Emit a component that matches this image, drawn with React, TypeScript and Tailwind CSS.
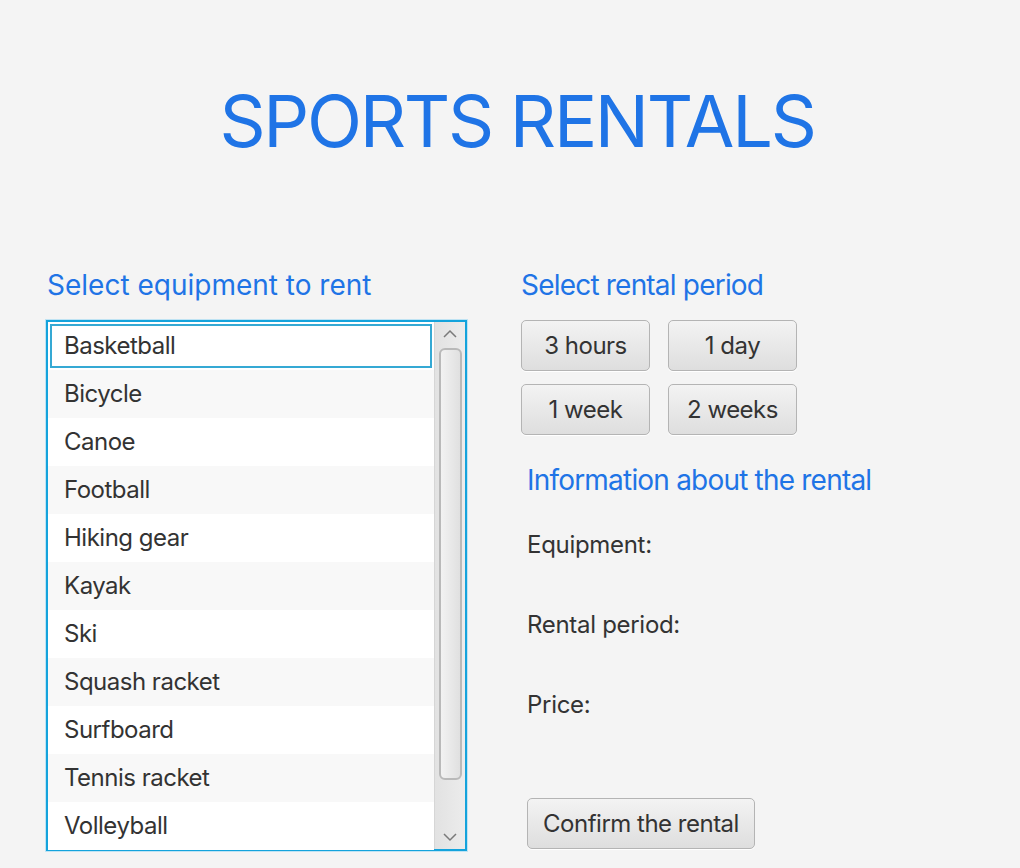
import React, { useState } from "react";

const equipment = [
  "Basketball",
  "Bicycle",
  "Canoe",
  "Football",
  "Hiking gear",
  "Kayak",
  "Ski",
  "Squash racket",
  "Surfboard",
  "Tennis racket",
  "Volleyball",
];

const periods = ["3 hours", "1 day", "1 week", "2 weeks"];

const FxButton = ({ label, className = "" }: { label: string; className?: string }) => (
  <button
    className={`h-[51px] rounded-[5px] border-[1.5px] border-[#b4b4b4] bg-gradient-to-b from-[#f3f3f3] to-[#dedede] text-[24px] tracking-[-0.5px] text-[#333333] shadow-[0_1px_0_#ffffff] ${className}`}
  >
    {label}
  </button>
);

const App = () => {
  const [selected, setSelected] = useState(0);

  return (
    <div
      className="relative h-[868px] w-full overflow-hidden bg-[#f4f4f4]"
      style={{ fontFamily: "Inter, 'Noto Sans', sans-serif" }}
    >
      <h1 className="pt-[85px] pl-[14px] text-center text-[72px] leading-[72px] font-normal tracking-[-2.3px] text-[#1f74e6]">
        SPORTS RENTALS
      </h1>

      <div className="mt-[110px] flex pl-[46px]">
        {/* equipment list */}
        <div className="w-[421px]">
          <h2 className="pl-[1px] text-[28px] leading-[36px] text-[#1f74e6]">
            Select equipment to rent
          </h2>
          <div className="mt-[17px] flex h-[531px] border-2 border-[#14a3dc] bg-white shadow-[0_0_0_1px_#bfe3f3]">
            <ul className="flex-1">
              {equipment.map((item, index) => (
                <li
                  key={item}
                  onClick={() => setSelected(index)}
                  className={`flex h-[48px] items-center pl-[16px] text-[24px] tracking-[-0.5px] text-[#333333] ${
                    index === selected
                      ? "bg-white outline-2 -outline-offset-4 outline-[#35a9d4]"
                      : index % 2 === 1
                        ? "bg-[#f8f8f8]"
                        : "bg-white"
                  }`}
                >
                  {item}
                </li>
              ))}
            </ul>
            <div className="flex w-[31px] flex-col items-center border-l border-[#d6d6d6] bg-gradient-to-r from-[#e2e2e2] to-[#ececec]">
              <svg width="16" height="22" viewBox="0 0 16 22" className="mt-[2px]">
                <path d="M2 13 L8 7 L14 13" fill="none" stroke="#7a7a7a" strokeWidth="1.5" />
              </svg>
              <div className="mt-[2px] h-[432px] w-[23px] rounded-[6px] border-2 border-[#b9b9b9] bg-gradient-to-r from-[#f2f2f2] to-[#e0e0e0]" />
              <div className="flex-1" />
              <svg width="16" height="22" viewBox="0 0 16 22" className="mb-[2px]">
                <path d="M2 9 L8 15 L14 9" fill="none" stroke="#7a7a7a" strokeWidth="1.5" />
              </svg>
            </div>
          </div>
        </div>

        {/* rental period & info */}
        <div className="ml-[54px] flex flex-col">
          <h2 className="text-[28px] leading-[36px] tracking-[-0.8px] text-[#1f74e6]">
            Select rental period
          </h2>
          <div className="mt-[17px] grid w-[276px] grid-cols-2 gap-x-[18px] gap-y-[13px]">
            {periods.map((p) => (
              <FxButton key={p} label={p} />
            ))}
          </div>
          <div className="flex flex-col pl-[6px]">
            <h2 className="mt-[27px] text-[28px] leading-[36px] tracking-[-0.8px] text-[#1f74e6]">
              Information about the rental
            </h2>
            <div className="mt-[33px] flex flex-col gap-[52px] text-[24px] leading-[28px] tracking-[-0.3px] text-[#333333]">
              <span>Equipment:</span>
              <span>Rental period:</span>
              <span>Price:</span>
            </div>
            <FxButton label="Confirm the rental" className="mt-[79px] w-[228px]" />
          </div>
        </div>
      </div>
    </div>
  );
};

export default App;
